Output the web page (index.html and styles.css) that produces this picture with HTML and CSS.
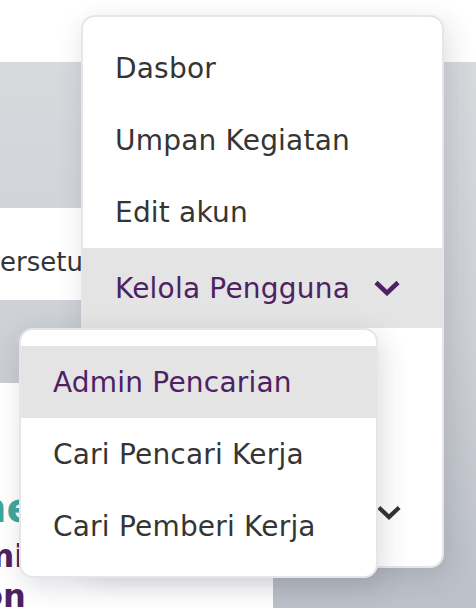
FILE: index.html
```html
<!DOCTYPE html>
<html lang="id">
<head>
<meta charset="utf-8">
<title>Menu</title>
<link rel="stylesheet" href="styles.css">
</head>
<body>
<div class="page">
  <header class="topbar"></header>
  <main class="content">
    <section class="card card-approval">
      <p class="card-text">ersetujuan</p>
    </section>
    <section class="card card-hero">
      <h2 class="hero-teal">ne</h2>
      <h3 class="hero-purple">mil<br>on</h3>
    </section>
  </main>

  <nav class="menu menu-main">
    <ul class="menu-list">
      <li class="menu-item">Dasbor</li>
      <li class="menu-item">Umpan Kegiatan</li>
      <li class="menu-item">Edit akun</li>
      <li class="menu-item menu-item-active menu-item-tall">
        <span>Kelola Pengguna</span>
        <svg class="chevron" viewBox="0 0 26 16" width="26" height="16"><polyline points="2,2.5 13,13 24,2.5" fill="none" stroke="currentColor" stroke-width="4.5"/></svg>
      </li>
      <li class="menu-item menu-item-hidden">Lowongan</li>
      <li class="menu-item menu-item-hidden">Laporan</li>
      <li class="menu-item menu-item-dark">
        <span>Pengaturan</span>
        <svg class="chevron chevron-small" viewBox="0 0 26 16" width="24" height="15"><polyline points="2,2.5 13,13 24,2.5" fill="none" stroke="currentColor" stroke-width="4.5"/></svg>
      </li>
    </ul>
  </nav>

  <nav class="menu menu-sub">
    <ul class="menu-list">
      <li class="menu-item menu-item-active">Admin Pencarian</li>
      <li class="menu-item">Cari Pencari Kerja</li>
      <li class="menu-item">Cari Pemberi Kerja</li>
    </ul>
  </nav>
</div>
</body>
</html>
```

FILE: styles.css
```css
* { box-sizing: border-box; }

html, body {
  margin: 0;
  padding: 0;
  background: #ffffff;
}

body {
  font-family: "DejaVu Sans", "Liberation Sans", sans-serif;
  color: #353535;
}

.page {
  position: relative;
  width: 476px;
  height: 608px;
  overflow: hidden;
}

.topbar {
  height: 62px;
  background: #ffffff;
}

.content {
  height: 546px;
  padding-top: 146px;
  background: linear-gradient(180deg, #d7d9dd 0%, #cdd0d5 50%, #bcc0c8 100%);
  display: flex;
  flex-direction: column;
  align-items: flex-start;
}

.card {
  background: #ffffff;
}

.card-approval {
  width: 220px;
  height: 92px;
  display: flex;
  align-items: center;
  padding-top: 15px;
}

.card-text {
  margin: 0;
  font-size: 26px;
  color: #353535;
  white-space: nowrap;
}

.card-hero {
  margin-top: 83px;
  width: 273px;
  flex: 1;
  padding-top: 103px;
  overflow: hidden;
}

.hero-teal {
  margin: 0 0 0 -22px;
  font-size: 40px;
  line-height: 44px;
  font-weight: bold;
  color: #3ea79c;
  white-space: nowrap;
}

.hero-purple {
  margin: 6px 0 0 -19px;
  font-size: 32px;
  line-height: 40px;
  font-weight: bold;
  color: #4d2163;
  white-space: nowrap;
}

.menu {
  position: absolute;
  background: #ffffff;
  border: 2px solid #e6e6ea;
  border-radius: 14px;
  box-shadow: 4px 8px 28px rgba(40, 45, 60, 0.16);
  overflow: hidden;
}

.menu-main {
  left: 81px;
  top: 15px;
  width: 363px;
  height: 553px;
  padding: 15px 0 18px;
}

.menu-sub {
  left: 19px;
  top: 328px;
  width: 359px;
  height: 250px;
  padding: 16px 0;
}

.menu-list {
  list-style: none;
  margin: 0;
  padding: 0;
}

.menu-item {
  height: 72px;
  display: flex;
  align-items: center;
  justify-content: space-between;
  padding: 0 42px 0 32px;
  font-size: 28px;
  letter-spacing: 0.2px;
  color: #353535;
  white-space: nowrap;
}

.menu-item-tall {
  height: 80px;
}

.menu-item-active {
  background: #e4e4e4;
  color: #4d2163;
}

.menu-item-hidden {
  height: 74px;
}

.menu-item-dark {
  color: #333333;
  padding-right: 41px;
}

.chevron {
  display: block;
  flex: none;
}
```
